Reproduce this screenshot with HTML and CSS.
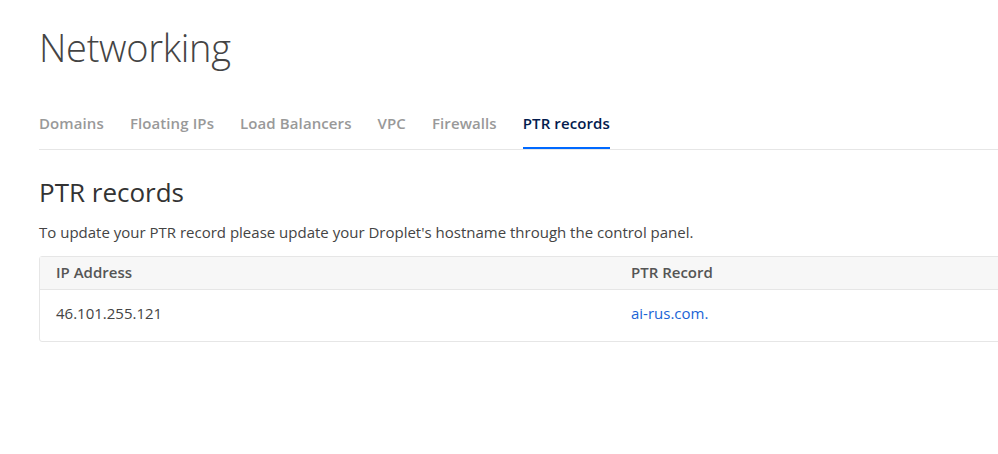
FILE: index.html
```html
<!DOCTYPE html>
<html lang="en">
<head>
    <meta charset="UTF-8">
    <title>Networking</title>
    <link rel="stylesheet" href="styles.css">
</head>
<body>
    <div class="page">
        <h1 class="page-title">Networking</h1>

        <ul class="tabs">
            <li class="tab">Domains</li>
            <li class="tab">Floating IPs</li>
            <li class="tab">Load Balancers</li>
            <li class="tab">VPC</li>
            <li class="tab">Firewalls</li>
            <li class="tab active">PTR records</li>
        </ul>

        <h2 class="section-title">PTR records</h2>
        <p class="hint">To update your PTR record please update your Droplet's hostname through the control panel.</p>

        <div class="table">
            <div class="row head">
                <div class="cell ip">IP Address</div>
                <div class="cell ptr">PTR Record</div>
            </div>
            <div class="row">
                <div class="cell ip">46.101.255.121</div>
                <div class="cell ptr"><a href="#">ai-rus.com.</a></div>
            </div>
        </div>
    </div>
</body>
</html>
```

FILE: styles.css
```css
* {
    margin: 0;
    padding: 0;
    box-sizing: border-box;
}

html, body {
    height: 100%;
}

body {
    font-family: "Open Sans", "Liberation Sans", sans-serif;
    color: #444;
    background: #fff;
    overflow: hidden;
}

.page {
    padding: 24px 0 0 39px;
    width: 100%;
    overflow: hidden;
}

.page-title {
    font-size: 38px;
    font-weight: 300;
    color: #444;
    line-height: 46px;
    letter-spacing: -0.3px;
}

.tabs {
    list-style: none;
    display: flex;
    gap: 26px;
    margin-top: 35px;
    border-bottom: 1px solid #e6e6e6;
}

.tab {
    font-size: 15px;
    font-weight: 600;
    color: #999;
    padding: 8px 0 16px;
    letter-spacing: 0.1px;
}

.tab.active {
    color: #031b4e;
    box-shadow: inset 0 -2px 0 #0069ff;
}

.section-title {
    font-size: 26px;
    font-weight: 400;
    color: #333;
    margin-top: 25px;
    line-height: 34px;
}

.hint {
    font-size: 15px;
    color: #444;
    margin-top: 13px;
}

.table {
    margin-top: 14px;
    border: 1px solid #e6e6e6;
    border-radius: 3px;
    width: calc(100% + 8px);
}

.row {
    display: flex;
    height: 51px;
    align-items: center;
    padding-bottom: 5px;
}

.row.head {
    height: 33px;
    padding-bottom: 2px;
    background: #f7f7f7;
    border-bottom: 1px solid #e6e6e6;
}

.cell {
    font-size: 15px;
}

.head .cell {
    font-weight: 600;
    color: #555;
}

.cell.ip {
    width: 591px;
    padding-left: 16px;
}

.cell a {
    color: #1a64d6;
    text-decoration: none;
}
```
